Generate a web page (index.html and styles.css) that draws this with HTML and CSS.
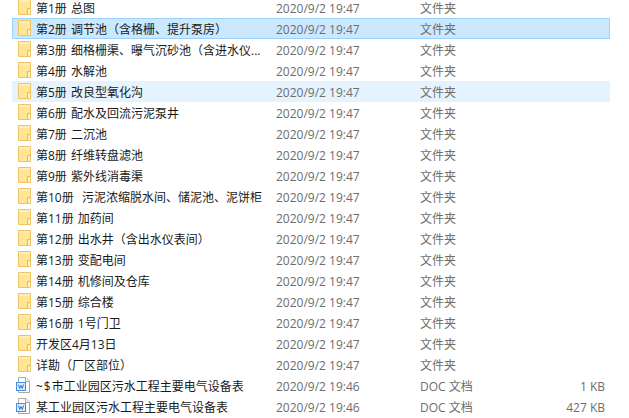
FILE: index.html
```html
<!DOCTYPE html>
<html lang="zh">
<head>
<meta charset="utf-8">
<title>文件列表</title>
<link rel="stylesheet" href="styles.css">
</head>
<body>
<svg class="defs" width="0" height="0" aria-hidden="true">
  <symbol id="folder" viewBox="0 0 13 16">
    <path d="M.5 .5H12.5V15.5H.5Z" fill="#ffe594" stroke="#eec566"/>
    <path d="M1 1H12V3H1Z" fill="#ffeeb8"/>
    <path d="M9.5 15.5V9.5H12.5" fill="#ffd65c" stroke="#e8b94e"/>
    <path d="M10 10H12V15H10Z" fill="#fff3c8"/>
  </symbol>
  <symbol id="doc" viewBox="0 0 15 16">
    <path d="M2.5 .5H10L13.5 4V15.5H2.5Z" fill="#fff" stroke="#a8a8a8"/>
    <path d="M9.5 .5V4.5H13.5" fill="#f2f2f2" stroke="#a8a8a8"/>
    <rect x=".5" y="5.5" width="9" height="8" fill="#dcecfb" stroke="#3f8fe0"/>
    <path d="M2.5 7.5L3.7 11.5L5 8.5L6.3 11.5L7.5 7.5" fill="none" stroke="#2a7bd0"/>
  </symbol>
</svg>
<main class="list">
  <div class="row"><svg class="icon"><use href="#folder"/></svg><span class="name">第1册 总图</span><span class="date">2020/9/2 19:47</span><span class="type">文件夹</span><span class="size"></span></div>
  <div class="row selected"><svg class="icon"><use href="#folder"/></svg><span class="name">第2册 调节池（含格栅、提升泵房）</span><span class="date">2020/9/2 19:47</span><span class="type">文件夹</span><span class="size"></span></div>
  <div class="row"><svg class="icon"><use href="#folder"/></svg><span class="name">第3册 细格栅渠、曝气沉砂池（含进水仪...</span><span class="date">2020/9/2 19:47</span><span class="type">文件夹</span><span class="size"></span></div>
  <div class="row"><svg class="icon"><use href="#folder"/></svg><span class="name">第4册 水解池</span><span class="date">2020/9/2 19:47</span><span class="type">文件夹</span><span class="size"></span></div>
  <div class="row hover"><svg class="icon"><use href="#folder"/></svg><span class="name">第5册 改良型氧化沟</span><span class="date">2020/9/2 19:47</span><span class="type">文件夹</span><span class="size"></span></div>
  <div class="row"><svg class="icon"><use href="#folder"/></svg><span class="name">第6册 配水及回流污泥泵井</span><span class="date">2020/9/2 19:47</span><span class="type">文件夹</span><span class="size"></span></div>
  <div class="row"><svg class="icon"><use href="#folder"/></svg><span class="name">第7册 二沉池</span><span class="date">2020/9/2 19:47</span><span class="type">文件夹</span><span class="size"></span></div>
  <div class="row"><svg class="icon"><use href="#folder"/></svg><span class="name">第8册 纤维转盘滤池</span><span class="date">2020/9/2 19:47</span><span class="type">文件夹</span><span class="size"></span></div>
  <div class="row"><svg class="icon"><use href="#folder"/></svg><span class="name">第9册 紫外线消毒渠</span><span class="date">2020/9/2 19:47</span><span class="type">文件夹</span><span class="size"></span></div>
  <div class="row"><svg class="icon"><use href="#folder"/></svg><span class="name">第10册&nbsp; 污泥浓缩脱水间、储泥池、泥饼柜</span><span class="date">2020/9/2 19:47</span><span class="type">文件夹</span><span class="size"></span></div>
  <div class="row"><svg class="icon"><use href="#folder"/></svg><span class="name">第11册 加药间</span><span class="date">2020/9/2 19:47</span><span class="type">文件夹</span><span class="size"></span></div>
  <div class="row"><svg class="icon"><use href="#folder"/></svg><span class="name">第12册 出水井（含出水仪表间）</span><span class="date">2020/9/2 19:47</span><span class="type">文件夹</span><span class="size"></span></div>
  <div class="row"><svg class="icon"><use href="#folder"/></svg><span class="name">第13册 变配电间</span><span class="date">2020/9/2 19:47</span><span class="type">文件夹</span><span class="size"></span></div>
  <div class="row"><svg class="icon"><use href="#folder"/></svg><span class="name">第14册 机修间及仓库</span><span class="date">2020/9/2 19:47</span><span class="type">文件夹</span><span class="size"></span></div>
  <div class="row"><svg class="icon"><use href="#folder"/></svg><span class="name">第15册 综合楼</span><span class="date">2020/9/2 19:47</span><span class="type">文件夹</span><span class="size"></span></div>
  <div class="row"><svg class="icon"><use href="#folder"/></svg><span class="name">第16册 1号门卫</span><span class="date">2020/9/2 19:47</span><span class="type">文件夹</span><span class="size"></span></div>
  <div class="row"><svg class="icon"><use href="#folder"/></svg><span class="name">开发区4月13日</span><span class="date">2020/9/2 19:47</span><span class="type">文件夹</span><span class="size"></span></div>
  <div class="row"><svg class="icon"><use href="#folder"/></svg><span class="name">详勘（厂区部位）</span><span class="date">2020/9/2 19:47</span><span class="type">文件夹</span><span class="size"></span></div>
  <div class="row"><svg class="icon icon-doc"><use href="#doc"/></svg><span class="name"><span class="tilde">~$</span>市工业园区污水工程主要电气设备表</span><span class="date">2020/9/2 19:46</span><span class="type">DOC 文档</span><span class="size">1 KB</span></div>
  <div class="row"><svg class="icon icon-doc"><use href="#doc"/></svg><span class="name">某工业园区污水工程主要电气设备表</span><span class="date">2020/9/2 19:46</span><span class="type">DOC 文档</span><span class="size">427 KB</span></div>
</main>
</body>
</html>
```

FILE: styles.css
```css
html, body {
  margin: 0;
  height: 100%;
  overflow: hidden;
  background: #fff;
}
.defs {
  display: block;
  height: 0;
}
.list {
  display: flex;
  flex-direction: column;
  margin: -3px 19px 0 12px;
  font: 12px/19px "Open Sans", "Noto Sans CJK SC", sans-serif;
  color: #1a1a1a;
}
.row {
  display: grid;
  grid-template-columns: 24px 240px 144px 1fr 60px;
  align-items: start;
  height: 21px;
  box-sizing: border-box;
  flex: none;
}
.selected {
  background: #cce8ff;
  outline: 1px solid #99d1ff;
  outline-offset: -1px;
}
.hover {
  background: #e5f3ff;
}
.icon {
  width: 13px;
  height: 16px;
  margin: 2px 0 0 6px;
}
.icon-doc {
  width: 15px;
  margin-left: 4px;
}
.name, .date, .type, .size {
  padding-top: 2px;
  white-space: nowrap;
}
.name {
  overflow: hidden;
  word-spacing: 1px;
}
.tilde {
  letter-spacing: 1px;
}
.date, .type, .size {
  color: #6d6d6d;
}
.size {
  text-align: right;
  padding-right: 5px;
}
```
